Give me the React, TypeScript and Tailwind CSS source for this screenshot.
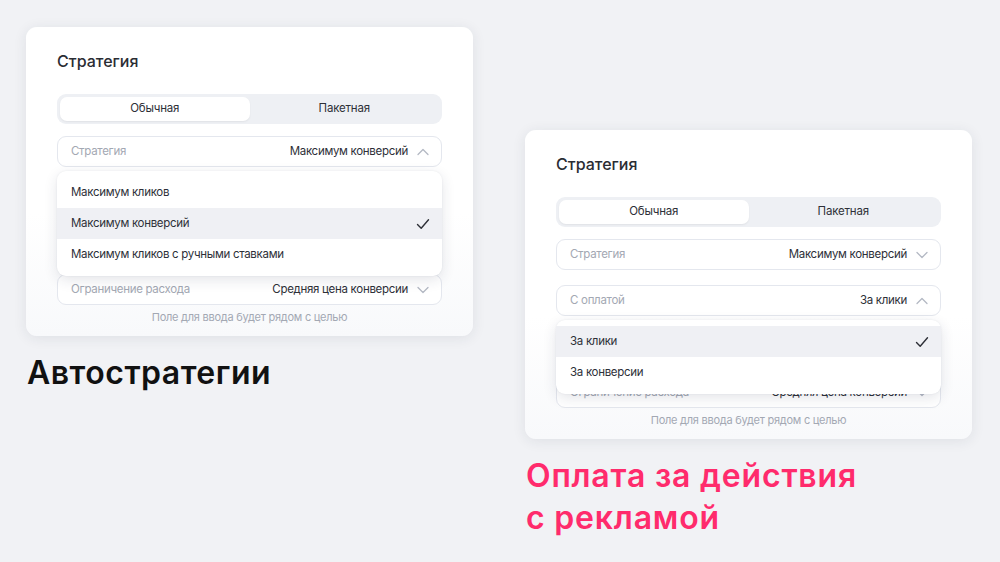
import React from "react";

const font = { fontFamily: "Inter, 'Noto Sans', sans-serif" };

function Chevron({ up }: { up?: boolean }) {
  return (
    <svg width="14" height="14" viewBox="0 0 14 14" fill="none" className="shrink-0">
      {up ? (
        <polyline points="2,9.5 7,4.5 12,9.5" stroke="#b4b9c4" strokeWidth="1.3" strokeLinecap="round" strokeLinejoin="round" />
      ) : (
        <polyline points="2,4.5 7,9.5 12,4.5" stroke="#b4b9c4" strokeWidth="1.3" strokeLinecap="round" strokeLinejoin="round" />
      )}
    </svg>
  );
}

function Check() {
  return (
    <svg width="16" height="16" viewBox="0 0 16 16" fill="none" className="shrink-0">
      <polyline points="2.5,8.5 6.2,12.2 13.5,3.8" stroke="#2d2f36" strokeWidth="1.4" strokeLinecap="round" strokeLinejoin="round" />
    </svg>
  );
}

function Field({ label, value, up, hidden }: { label: string; value: string; up?: boolean; hidden?: boolean }) {
  return (
    <div className={`h-[31px] rounded-[9px] border border-[#e4e7ee] bg-white flex items-center pl-[13px] pr-[11px] ${hidden ? "invisible" : ""}`}>
      <span className="text-[11.5px] tracking-[-0.3px] text-[#a3a8b3] flex-1">{label}</span>
      <span className="text-[11.5px] tracking-[-0.3px] text-[#2e3038] mr-[8px]">{value}</span>
      <Chevron up={up} />
    </div>
  );
}

function Dropdown({ items, selected }: { items: string[]; selected: number }) {
  return (
    <div className="absolute left-0 right-0 top-[35px] z-10 bg-white rounded-[9px] py-[6px] shadow-[0_4px_14px_rgba(30,40,70,0.12),0_0_2px_rgba(30,40,70,0.08)]">
      {items.map((it, i) => (
        <div
          key={it}
          className={`h-[31px] flex items-center pl-[14px] pr-[11px] text-[11.5px] tracking-[-0.3px] text-[#2e3038] ${i === selected ? "bg-[#eff0f4]" : ""}`}
        >
          <span className="flex-1">{it}</span>
          {i === selected && <Check />}
        </div>
      ))}
    </div>
  );
}

function Card({ children }: { children: React.ReactNode }) {
  return (
    <div className="w-[447px] rounded-[11px] bg-gradient-to-b from-white from-60% to-[#f8f9fb] shadow-[0_2px_14px_rgba(30,40,70,0.09)] px-[31px] pt-[24px] pb-[12px]">
      <div className="text-[16px] leading-[20px] font-medium text-[#2a2c33]">Стратегия</div>
      <div className="mt-[23px] h-[30px] rounded-[9px] bg-[#eef0f4] p-[3px] flex">
        <div className="flex-1 rounded-[7px] bg-white shadow-[0_1px_2px_rgba(0,0,0,0.06)] flex items-center justify-center text-[11.5px] tracking-[-0.2px] text-[#2e3038]">
          Обычная
        </div>
        <div className="flex-1 flex items-center justify-center text-[11.5px] tracking-[-0.2px] text-[#2e3038]">Пакетная</div>
      </div>
      <div className="mt-[12px] flex flex-col gap-[15px]">{children}</div>
      <div className="mt-[5px] text-center text-[11px] tracking-[-0.25px] leading-[14px] text-[#a3a8b3]">Поле для ввода будет рядом с целью</div>
    </div>
  );
}

export default function App() {
  return (
    <div style={font} className="w-[1000px] h-[562px] bg-[#f1f2f5] flex overflow-hidden">
      <div className="pl-[26px] pt-[27px] flex flex-col">
        <Card>
          <div className="relative">
            <Field label="Стратегия" value="Максимум конверсий" up />
            <Dropdown
              items={["Максимум кликов", "Максимум конверсий", "Максимум кликов с ручными ставками"]}
              selected={1}
            />
          </div>
          <Field label="С оплатой" value="За клики" hidden />
          <Field label="Цель" value="Покупка" hidden />
          <Field label="Ограничение расхода" value="Средняя цена конверсии" />
        </Card>
        <div className="mt-[17px] pl-[1px] text-[32px] leading-[40px] font-semibold text-[#111] tracking-[0.5px]">
          Автостратегии
        </div>
      </div>
      <div className="pl-[52px] pt-[130px] flex flex-col">
        <Card>
          <Field label="Стратегия" value="Максимум конверсий" />
          <div className="relative">
            <Field label="С оплатой" value="За клики" up />
            <Dropdown items={["За клики", "За конверсии"]} selected={0} />
          </div>
          <Field label="Цель" value="Покупка" hidden />
          <Field label="Ограничение расхода" value="Средняя цена конверсии" />
        </Card>
        <div className="mt-[16px] pl-[1px] text-[32px] leading-[42px] font-semibold text-[#ff2b6c] tracking-[0.8px]">
          Оплата за действия
          <br />с рекламой
        </div>
      </div>
    </div>
  );
}
